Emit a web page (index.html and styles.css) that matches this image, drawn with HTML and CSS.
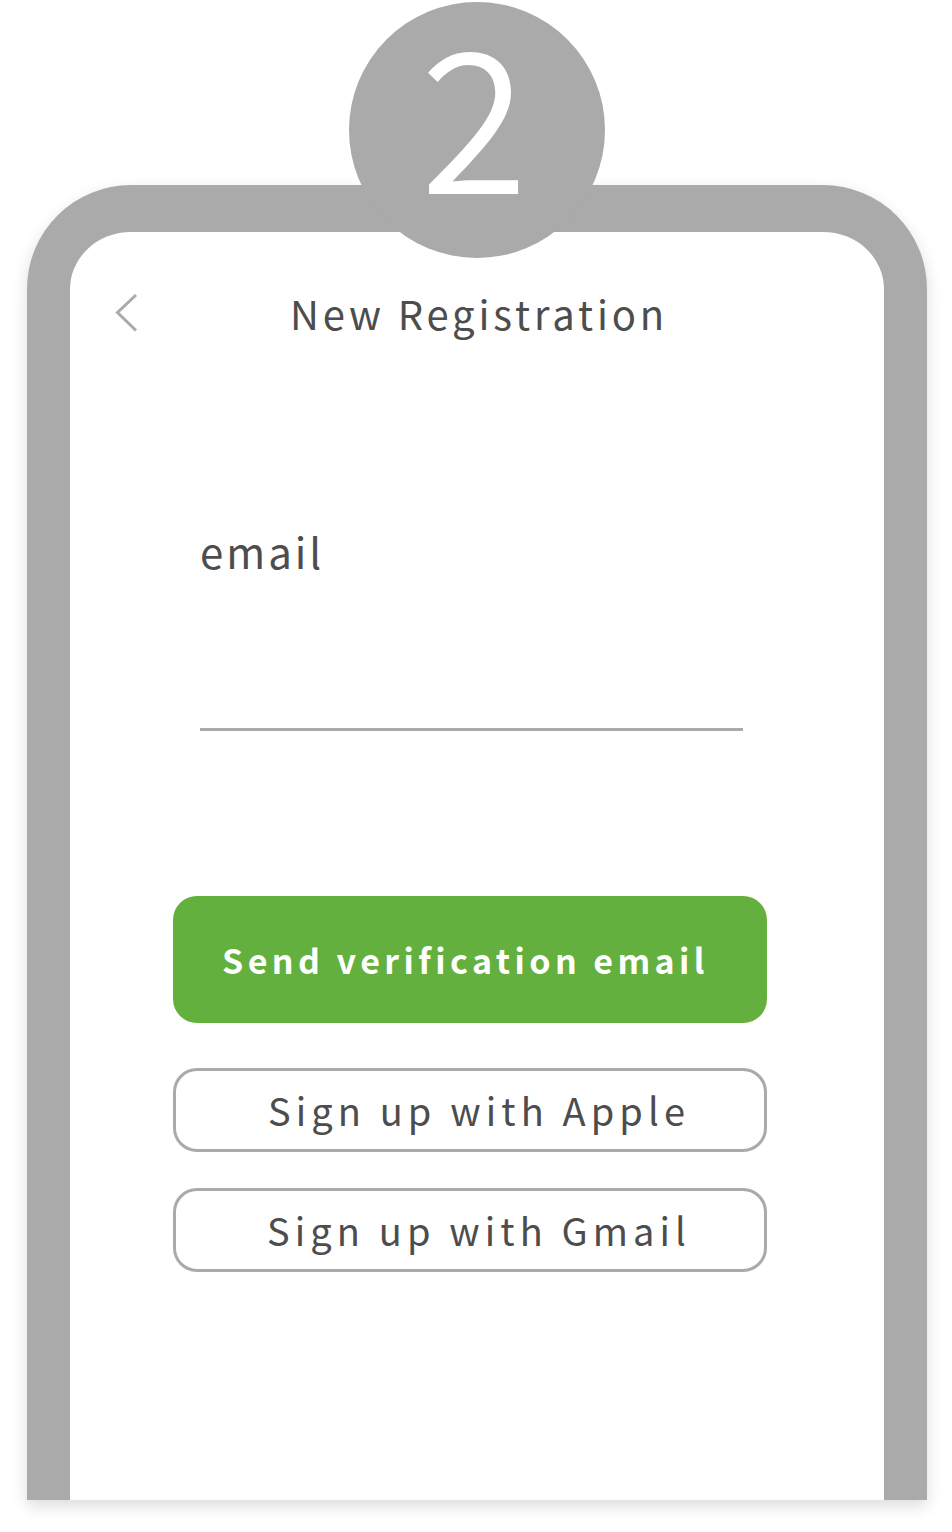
FILE: index.html
```html
<!DOCTYPE html>
<html lang="en">
<head>
<meta charset="utf-8">
<title>New Registration</title>
<link rel="stylesheet" href="styles.css">
</head>
<body>
<div class="page">
  <div class="phone">
    <div class="step-badge"><span class="step-num">2</span></div>
    <div class="screen">
      <header class="topbar">
        <span class="back" aria-label="Back">
          <svg width="24" height="40" viewBox="0 0 24 40"><path d="M21 2 L2.5 19.5 L21 37.5" fill="none" stroke="#aaaaaa" stroke-width="3"/></svg>
        </span>
        <h1 class="title">New Registration</h1>
        <span></span>
      </header>
      <div class="form">
        <div class="field">
          <label class="field-label">email</label>
          <div class="field-input"></div>
        </div>
        <button class="btn btn-primary">Send verification email</button>
        <button class="btn btn-outline btn-apple">Sign up with Apple</button>
        <button class="btn btn-outline btn-gmail">Sign up with Gmail</button>
      </div>
    </div>
  </div>
</div>
</body>
</html>
```
FILE: styles.css
```css
* { box-sizing: border-box; }
html, body { margin: 0; padding: 0; background: #ffffff; }
body {
  font-family: "Noto Sans CJK JP", "Noto Sans", "Liberation Sans", sans-serif;
  color: #4d4d4d;
  width: 952px;
  height: 1532px;
  overflow: hidden;
}
.page {
  padding: 185px 0 0 27px;
}
.phone {
  position: relative;
  width: 900px;
  height: 1315px;
  border: 47px solid #aaaaaa;
  border-left-width: 43px;
  border-right-width: 43px;
  border-bottom: 0;
  border-radius: 104px 104px 0 0;
  background: #ffffff;
  box-shadow: 0 6px 16px rgba(0, 0, 0, 0.14);
}
.step-badge {
  position: absolute;
  top: -230px;
  left: 50%;
  transform: translateX(-50%);
  width: 256px;
  height: 256px;
  border-radius: 50%;
  background: #aaaaaa;
  display: flex;
  align-items: center;
  justify-content: center;
  padding: 0 6px 42px 0;
}
.step-num {
  color: #ffffff;
  font-size: 196px;
  font-weight: 350;
  line-height: 200px;
}
.screen {
  height: 100%;
}
.topbar {
  display: grid;
  grid-template-columns: 1fr auto 1fr;
  align-items: center;
  padding-top: 61px;
}
.back {
  display: flex;
  padding-left: 45px;
}
.title {
  margin: 0;
  font-size: 40px;
  font-weight: 400;
  line-height: 1;
  letter-spacing: 3.85px;
  margin-right: -4px;
  color: #4d4d4d;
}
.form {
  margin-left: 103px;
  width: 594px;
  display: flex;
  flex-direction: column;
}
.field {
  padding: 0 24px 0 27px;
  margin-top: 197px;
}
.field-label {
  display: block;
  font-size: 42px;
  line-height: 1;
  letter-spacing: 3px;
  color: #4d4d4d;
}
.field-input {
  height: 159px;
  border-bottom: 3px solid #aaaaaa;
}
.btn {
  font-family: inherit;
  display: flex;
  align-items: center;
  justify-content: center;
  width: 100%;
  cursor: pointer;
  line-height: 1;
}
.btn-primary {
  margin-top: 165px;
  height: 127px;
  border: 0;
  border-radius: 24px;
  background: #63b03e;
  color: #ffffff;
  font-size: 34px;
  font-weight: 700;
  letter-spacing: 4.4px;
  padding: 0 9px 0 0;
}
.btn-outline {
  height: 84px;
  border: 3px solid #aaaaaa;
  border-radius: 24px;
  background: #ffffff;
  color: #4d4d4d;
  font-size: 38px;
  font-weight: 400;
  letter-spacing: 5.1px;
  padding: 0 0 0 18px;
}
.btn-apple { margin-top: 45px; }
.btn-gmail { margin-top: 36px; }
```
